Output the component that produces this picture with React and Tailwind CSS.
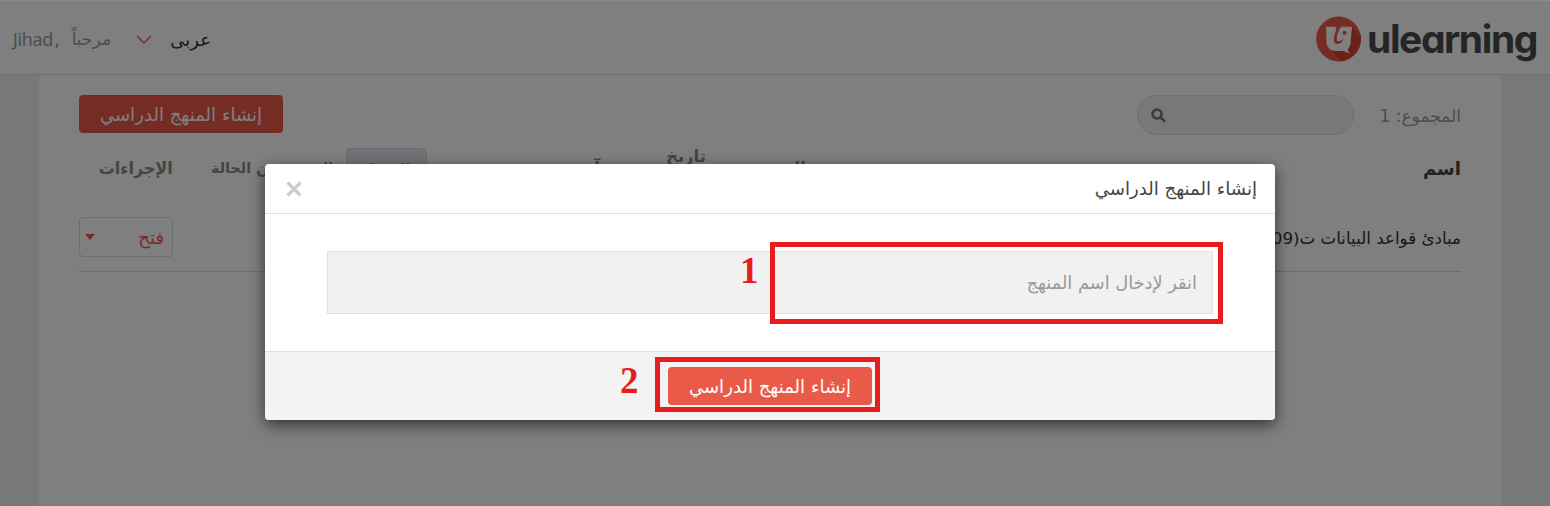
import React from 'react';

const arabic = "font-['DejaVu_Sans','Noto_Sans',sans-serif]";

function Logo() {
  return (
    <div className="flex items-center" dir="ltr">
      <svg className="mt-[3px] h-[46px] w-[46px]" viewBox="0 0 46 46">
        <defs>
          <clipPath id="disc"><circle cx="22.6" cy="23" r="22.4" /></clipPath>
        </defs>
        <circle cx="22.6" cy="23" r="22.4" fill="#e95848" />
        <path d="M36 10.700L50 25V50H28L15 34L32 35Z" fill="#d8402f" clipPath="url(#disc)" />
        <path d="M10 10.700H36L34.500 27C34.300 30 33 32 31.500 33.300L33.300 37.500L27.500 35H20C13.500 35 10.800 31.500 10.500 26Z" fill="#fff" />
        <path d="M20 10.500H25.500C22.500 14 21.300 18 20.800 21.500C20.400 24.500 21.500 25.800 24 25C25.500 24.500 26.500 23.500 27.300 22.500C26.800 26 24 28.300 21 28C17.800 27.700 17.300 24.500 18 21C18.800 17 20.800 14 20 10.500Z" fill="#e95848" />
        <circle cx="28.500" cy="16.800" r="2" fill="#e95848" />
      </svg>
      <span className="mt-[4px] ml-[5px] w-[171px] whitespace-nowrap font-[Inter,sans-serif] text-[39px] leading-[50px] font-bold tracking-[-1.400px] text-[#4a4a4c] [font-feature-settings:'cv11']">ulearning</span>
    </div>
  );
}

function Header() {
  return (
    <header className="flex h-[75px] items-center justify-between border-b border-[#dcdcdc] bg-white pr-[12px] pl-[13px]" dir="ltr">
      <div className="flex items-center pt-[6px] text-[17px] text-[#999]">
        <span className="flex w-[58px] pb-[2px] font-['Open_Sans',sans-serif] text-[18px] leading-[24px] tracking-[-0.3px]">Jihad<span className="ml-[2px]">,</span></span>
        <span dir="rtl" className="w-[40px] whitespace-nowrap">مرحباً</span>
        <svg className="ml-[25px] h-[10px] w-[16px]" viewBox="0 0 16 10" fill="none" stroke="#e95848" strokeWidth="1.400"><path d="M1 1L8 8L15 1" /></svg>
        <span dir="rtl" className="ml-[18px] w-[41px] text-[18px] leading-[26px] whitespace-nowrap text-[#333]">عربى</span>
      </div>
      <Logo />
    </header>
  );
}

function Toolbar() {
  return (
    <div className="flex items-start justify-between pt-[20px]">
      <div className="flex items-center">
        <span className="w-[82px] pt-[3px] text-[17px] whitespace-nowrap text-[#999]">المجموع: 1</span>
        <div className="mr-[25px] flex h-[40px] w-[217px] items-center justify-end rounded-full border border-[#dedede] bg-[#f0f0f0] pl-[13px]">
          <svg className="h-[15px] w-[15px]" viewBox="0 0 15 15" fill="none" stroke="#777" strokeWidth="2.600"><circle cx="6" cy="6" r="4.500" /><path d="M9.500 9.500L14 13.500" /></svg>
        </div>
      </div>
      <button className="flex h-[38px] w-[204px] items-center justify-center rounded bg-[#e95848] pt-px text-[18.100px] text-white"><span>إنشاء المنهج الدراسي</span></button>
    </div>
  );
}

function CourseTable() {
  return (
    <div>
      <div className="flex h-[66px] pt-[13px] text-[17px] font-bold whitespace-nowrap text-[#8a8a8a]">
        <span className="w-[655px] pt-[8px] text-[18px] leading-[25px] text-[#444]">اسم</span>
        <span className="w-[100px] pt-[8px]">النوع</span>
        <span className="w-[106px] text-[16.500px] leading-[18px]">تاريخ<br />البدء</span>
        <span className="w-[75px] pt-[8px]">آخر</span>
        <span className="w-[98px] pt-[8px]">عدد</span>
        <span className="flex h-[40px] w-[81px] items-center justify-center rounded border border-[#d4d3de] bg-[#e4e3ec] pt-[3px] text-[14.500px]">الفصل</span>
        <span className="mr-[13px] w-[160px] pt-[10px] text-[14.400px]">التحقق من الحالة</span>
        <span className="w-[74px] pt-[8px]"><span className="inline-block origin-right scale-x-[0.94]">الإجراءات</span></span>
      </div>
      <div className="flex h-[71px] items-center justify-between border-b border-[#d8d8d8] pt-[2px] text-[17px]">
        <span className="pt-[3px] text-[16.700px] whitespace-nowrap text-[#333]">مبادئ قواعد البيانات ت(09)</span>
        <div className="flex h-[40px] w-[94px] items-center justify-between rounded border border-[#dadada] px-[8px] pl-[5px] text-[#e95848]">
          <span className="text-[18px]">فتح</span>
          <svg className="h-[6px] w-[10px]" viewBox="0 0 10 6"><path d="M0 0H10L5 6Z" fill="#e95848" /></svg>
        </div>
      </div>
    </div>
  );
}

function Modal() {
  return (
    <div className="absolute top-[164px] left-[265px] flex h-[256px] w-[1010px] flex-col overflow-hidden rounded bg-white shadow-[0_5px_15px_rgba(0,0,0,0.6)]">
      <div className="flex h-[50px] shrink-0 items-center justify-between border-b border-[#e2e2e2] pr-[18px] pl-[21px] text-[18.100px] text-[#444]">
        <span>إنشاء المنهج الدراسي</span>
        <svg className="h-[16px] w-[16px]" viewBox="0 0 16 16" stroke="#ccc" strokeWidth="3.200"><path d="M1.500 1.500L14.500 14.500M14.500 1.500L1.500 14.500" /></svg>
      </div>
      <div className="flex h-[137px] shrink-0 items-start px-[62px] pt-[37px]">
        <div className="flex h-[63px] w-full items-center border border-[#e0e0e0] bg-[#f1f1f1] pt-px pr-[15px] text-[17.800px] text-[#999]">انقر لإدخال اسم المنهج</div>
      </div>
      <div className="flex flex-1 items-center justify-center border-t border-[#e0e0e0] bg-[#f3f3f3]">
        <button className="flex h-[38px] w-[204px] items-center justify-center rounded bg-[#ea5a49] pt-px text-[18.100px] text-white"><span>إنشاء المنهج الدراسي</span></button>
      </div>
    </div>
  );
}

function Annotations() {
  return (
    <>
      <div className="absolute top-[242px] left-[770px] h-[82px] w-[453px] border-[5px] border-[#e81c1c]" />
      <div className="absolute top-[357px] left-[655px] h-[55px] w-[225px] border-[5px] border-[#e81c1c]" />
      <span className="absolute top-[251px] left-[740px] font-['Liberation_Serif',serif] text-[37px] leading-[40px] font-bold text-[#e81c1c]">1</span>
      <span className="absolute top-[361px] left-[620px] font-['Liberation_Serif',serif] text-[37px] leading-[40px] font-bold text-[#e81c1c]">2</span>
    </>
  );
}

export default function App() {
  return (
    <div dir="rtl" className={`relative h-[506px] w-[1550px] overflow-hidden bg-[#f0f0f0] ${arabic}`}>
      <Header />
      <main className="mr-[49px] h-[431px] w-[1462px] bg-white px-[40px]">
        <Toolbar />
        <CourseTable />
      </main>
      <div className="absolute inset-0 border-t border-[#8a8a8a] bg-black/50" />
      <Modal />
      <Annotations />
    </div>
  );
}
